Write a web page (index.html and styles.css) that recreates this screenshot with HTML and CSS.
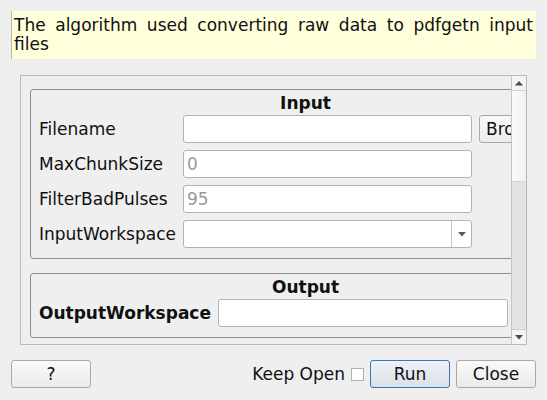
FILE: index.html
```html
<!DOCTYPE html>
<html>
<head>
<meta charset="utf-8">
<link rel="stylesheet" href="styles.css">
</head>
<body>
<div class="dialog">
  <div class="desc">The algorithm used converting raw data to pdfgetn input files</div>
  <div class="scrollframe">
    <div class="viewport">
      <div class="content">
        <div class="group">
          <div class="gtitle">Input</div>
          <div class="grid grid-in">
            <div class="lbl">Filename</div>
            <div class="field"></div>
            <div class="btn browse">Browse</div>
            <div class="lbl">MaxChunkSize</div>
            <div class="field"><span class="ph">0</span></div>
            <div></div>
            <div class="lbl">FilterBadPulses</div>
            <div class="field"><span class="ph">95</span></div>
            <div></div>
            <div class="lbl">InputWorkspace</div>
            <div class="field combo">
              <div class="combo-text"></div>
              <div class="combo-arrow"><svg width="8" height="5" viewBox="0 0 8 5"><path d="M0 0H8L4 4.5Z" fill="#5a5a5a"/></svg></div>
            </div>
            <div></div>
          </div>
        </div>
        <div class="group group-out">
          <div class="gtitle">Output</div>
          <div class="grid grid-out">
            <div class="lbl bold">OutputWorkspace</div>
            <div class="field"></div>
          </div>
        </div>
      </div>
    </div>
    <div class="vscroll">
      <div class="sb-btn up"><svg width="8" height="5" viewBox="0 0 8 5"><path d="M0 4.5H8L4 0Z" fill="#4a4a4a"/></svg></div>
      <div class="sb-thumb"></div>
      <div class="sb-track"></div>
      <div class="sb-btn down"><svg width="8" height="5" viewBox="0 0 8 5"><path d="M0 0H8L4 4.5Z" fill="#4a4a4a"/></svg></div>
    </div>
  </div>
  <div class="buttons">
    <div class="btn bb">?</div>
    <div class="spacer"></div>
    <div class="keep">Keep Open</div>
    <div class="check"></div>
    <div class="btn bb default">Run</div>
    <div class="btn bb">Close</div>
  </div>
</div>
</body>
</html>
```

FILE: styles.css
```css
html, body {
  margin: 0;
  padding: 0;
  background: #efefef;
}
body {
  font-family: "DejaVu Sans", sans-serif;
  font-size: 17px;
  color: #101010;
}
.dialog {
  width: 547px;
  height: 400px;
  box-sizing: border-box;
  padding: 11px 11px 0 11px;
  display: flex;
  flex-direction: column;
}
.desc {
  background: #ffffdc;
  border-left: 1px solid #b8b8a8;
  height: 48px;
  box-sizing: border-box;
  padding: 5px 3px 0 2px;
  line-height: 19px;
  text-align: justify;
}
.scrollframe {
  margin: 16px 9px 0 9px;
  height: 270px;
  box-sizing: border-box;
  border: 1px solid #b9b9b9;
  display: flex;
}
.viewport {
  flex: 1;
  overflow: hidden;
  padding: 13px 0 0 9px;
}
.content {
  width: 551px;
}
.group {
  border: 1px solid #8e8e8e;
  border-radius: 3px;
  padding: 4px 0 10px 8px;
}
.group-out {
  margin-top: 14px;
}
.gtitle {
  font-weight: bold;
  text-align: center;
  line-height: 19px;
  height: 19px;
  margin-bottom: 2px;
  padding-right: 8px;
}
.grid {
  display: grid;
  column-gap: 7px;
  row-gap: 7px;
  align-items: center;
}
.grid-in {
  grid-template-columns: 137px 289px 80px;
  grid-auto-rows: 28px;
}
.grid-out {
  grid-template-columns: 172px 290px;
  grid-auto-rows: 28px;
}
.lbl {
  white-space: nowrap;
}
.bold {
  font-weight: bold;
}
.field {
  height: 28px;
  box-sizing: border-box;
  background: #ffffff;
  border: 1px solid #b3b3b3;
  border-radius: 3px;
  padding: 0 3px;
  display: flex;
  align-items: center;
}
.ph {
  color: #9a9a9a;
}
.combo {
  padding: 0;
}
.combo-text {
  flex: 1;
}
.combo-arrow {
  width: 19px;
  height: 100%;
  border-left: 1px solid #c4c4c4;
  display: flex;
  align-items: center;
  justify-content: center;
}
.btn {
  height: 28px;
  box-sizing: border-box;
  border: 1px solid #a9a9a9;
  border-radius: 3px;
  background: linear-gradient(#f9f9f9, #ebebeb);
  display: flex;
  align-items: center;
  justify-content: center;
  white-space: nowrap;
}
.browse {
  justify-content: flex-start;
  padding-left: 6px;
}
.vscroll {
  width: 14px;
  border-left: 1px solid #c6c6c6;
  display: flex;
  flex-direction: column;
  background: #e3e3e3;
}
.sb-btn {
  height: 14px;
  background: #f4f4f4;
  display: flex;
  align-items: center;
  justify-content: center;
}
.sb-btn.up {
  border-bottom: 1px solid #cfcfcf;
}
.sb-btn.down {
  border-top: 1px solid #cfcfcf;
  margin-top: auto;
}
.sb-thumb {
  height: 91px;
  background: linear-gradient(90deg, #fbfbfb, #f1f1f1);
  border-bottom: 1px solid #d6d6d6;
  box-sizing: border-box;
}
.sb-track {
  flex: 1;
}
.buttons {
  margin-top: 15px;
  display: flex;
  align-items: center;
}
.bb {
  width: 80px;
}
.spacer {
  flex: 1;
}
.keep {
  margin-right: 6px;
}
.check {
  width: 13px;
  height: 13px;
  box-sizing: border-box;
  background: #ffffff;
  border: 1px solid #b0b0b0;
  margin-right: 6px;
}
.default {
  border-color: #3a78b4;
  background: linear-gradient(#edf1f5, #d9e1e9);
}
.buttons .btn + .btn {
  margin-left: 6px;
}
```
